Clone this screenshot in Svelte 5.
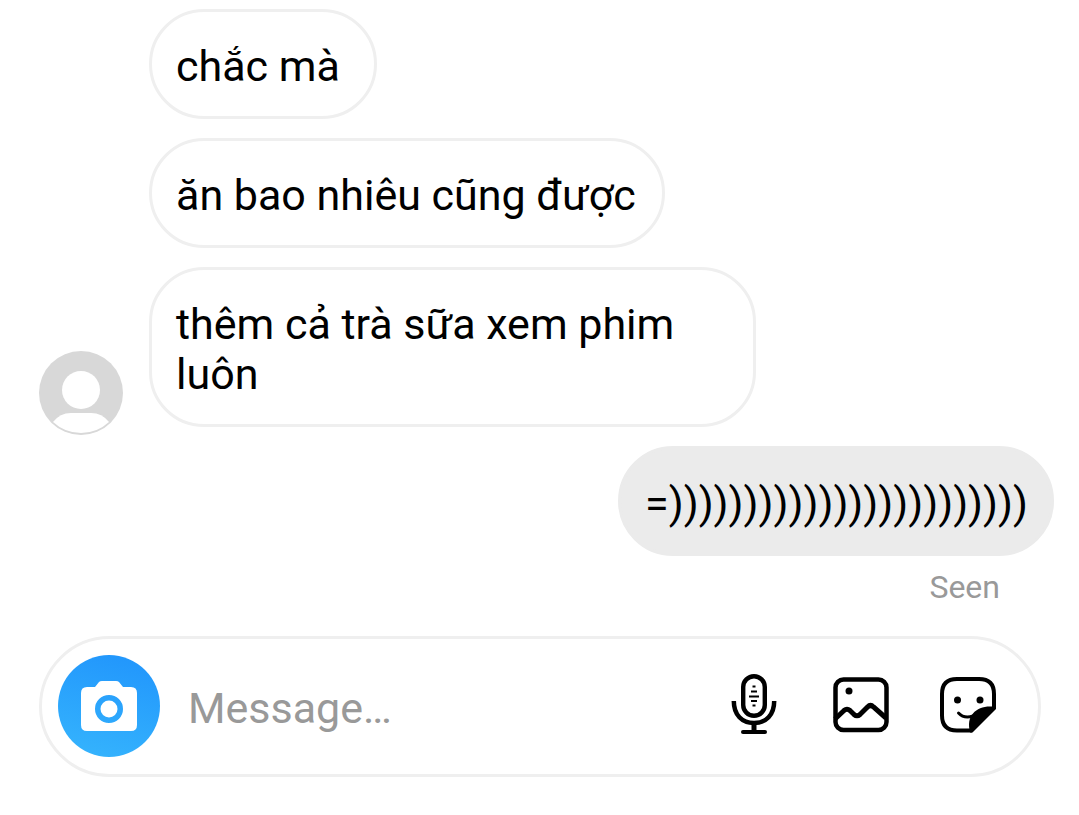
<script>
  const received = ['chắc mà', 'ăn bao nhiêu cũng được', 'thêm cả trà sữa xem phim luôn'];
  const sent = '=' + ')'.repeat(24);
  let draft = $state('');
</script>

<main>
  <section class="thread" aria-label="Conversation">
    <div class="incoming">
      <svg class="avatar" viewBox="0 0 84 84" role="img" aria-label="Profile picture">
        <circle cx="42" cy="42" r="42" fill="#d8d8d8" />
        <circle cx="42" cy="39" r="19" fill="#fff" />
        <path d="M14 71Q21 62 32 62H52Q63 62 70 71Q58 82 42 82T14 71Z" fill="#fff" />
      </svg>
      <div class="bubbles">
        {#each received as message}
          <p class="bubble">{message}</p>
        {/each}
      </div>
    </div>
    <div class="outgoing">
      <p class="bubble own">{sent}</p>
      <span class="status">Seen</span>
    </div>
  </section>

  <form class="composer" onsubmit={(e) => e.preventDefault()}>
    <button type="button" class="camera" aria-label="Camera">
      <svg width="56" height="50" viewBox="0 0 56 50">
        <path fill="#fff" fill-rule="evenodd" d="M6 6H14L18 1Q19 0 21 0H35Q37 0 38 1L42 6H50Q56 6 56 12V44Q56 50 50 50H6Q0 50 0 44V12Q0 6 6 6ZM28 14A14 14 0 1 0 28 42A14 14 0 1 0 28 14Z" />
        <circle cx="28" cy="28" r="8.5" fill="#fff" />
      </svg>
    </button>
    <input type="text" aria-label="Message" placeholder="Message…" bind:value={draft} />
    <div class="tools">
      <button type="button" aria-label="Voice message">
        <svg width="60" height="60" viewBox="0 0 60 60" fill="none" stroke="#000">
          <rect x="19.2" y="2.2" width="21.6" height="39.600" rx="10.8" stroke-width="4.400" />
          <path d="M9.8 27C9.8 41 18 49 30 49S50.200 41 50.200 27" stroke-width="4.500" />
          <path d="M30 49V57" stroke-width="5" />
          <path d="M19 58H41" stroke-width="4" stroke-linecap="round" />
          <path d="M28.500 12.500H31.500M27 17.500H33M25 22.500H35M27 27H33M28.500 31.500H31.500" stroke-width="2" />
        </svg>
      </button>
      <button type="button" aria-label="Photo">
        <svg width="60" height="60" viewBox="0 0 60 60" fill="none" stroke="#000" stroke-width="4.500">
          <rect x="4.500" y="5.500" width="51" height="50.500" rx="8" />
          <path d="M4 45L13 36.500Q16 34 19 36.500L23 40.500Q26 43 29 40.500L36.500 33Q39.500 30 42.500 33L55 44" stroke-width="5" />
          <circle cx="18" cy="17" r="3.500" fill="#000" stroke="none" />
        </svg>
      </button>
      <button type="button" aria-label="Sticker">
        <svg width="60" height="60" viewBox="0 0 60 60" fill="none" stroke="#000" stroke-width="4">
          <path d="M34 56.500H19Q4 56.500 4 41.500V20Q4 5 19 5H41Q56 5 56 20V34" />
          <path d="M32 58.500C30 50 31 44 35 39.500C40 33.500 48 31.500 58 33V35L34.500 58.500Z" fill="#000" stroke="none" />
          <circle cx="19.500" cy="26" r="3.500" fill="#000" stroke="none" />
          <circle cx="42" cy="26" r="3.500" fill="#000" stroke="none" />
          <path d="M20.500 39Q26 45 35 42" stroke-width="3" stroke-linecap="round" />
        </svg>
      </button>
    </div>
  </form>
</main>

<style>
  :global(body) {
    margin: 0;
    background: #fff;
  }
  main {
    font-family: Roboto, 'Noto Sans', sans-serif;
    font-size: 43px;
    line-height: 50px;
    color: #000;
    padding: 9px 0 38px;
  }
  .incoming {
    display: flex;
    align-items: flex-end;
    gap: 26px;
    padding-left: 39px;
  }
  .avatar {
    flex: none;
    width: 84px;
    height: 84px;
    margin-bottom: -8px;
  }
  .bubbles {
    display: flex;
    flex-direction: column;
    align-items: flex-start;
    gap: 19px;
  }
  .bubble {
    box-sizing: border-box;
    min-width: 228px;
    max-width: 607px;
    margin: 0;
    padding: 29px 26px 25px 24px;
    border: 3px solid #efefef;
    border-radius: 55px;
  }
  .outgoing {
    display: flex;
    flex-direction: column;
    align-items: flex-end;
    margin-top: 19px;
    padding-right: 25px;
  }
  .own {
    padding-right: 23px;
    background: #ebebeb;
    border-color: #ebebeb;
  }
  .status {
    margin: 12px 54px 0 0;
    font-size: 32px;
    line-height: 38px;
    color: #999;
  }
  .composer {
    box-sizing: border-box;
    display: flex;
    align-items: center;
    margin: 30px 38px 0 39px;
    padding: 16px 40px 17px 16px;
    min-height: 141px;
    border: 3px solid #efefef;
    border-radius: 71px;
  }
  button {
    flex: none;
    display: flex;
    align-items: center;
    justify-content: center;
    padding: 0;
    border: 0;
    background: none;
    cursor: pointer;
  }
  .camera {
    width: 102px;
    height: 102px;
    border-radius: 50%;
    background: linear-gradient(195deg, #2094fc, #36b5fd);
  }
  input {
    flex: 1;
    min-width: 0;
    height: 56px;
    margin: 0 24px 0 28px;
    padding: 4px 0 0;
    border: 0;
    outline: 0;
    background: none;
    font: inherit;
    color: inherit;
  }
  input::placeholder {
    color: #999;
    opacity: 1;
  }
  .tools {
    display: flex;
    gap: 47px;
    padding-bottom: 4px;
  }
</style>
